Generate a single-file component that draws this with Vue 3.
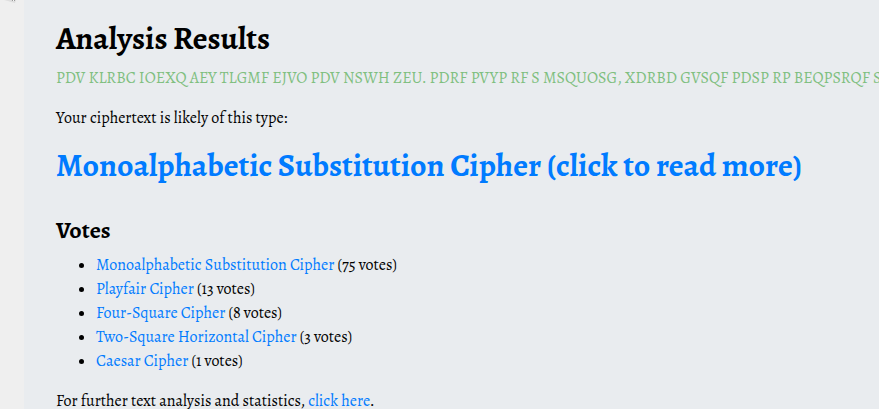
<script setup>
const ciphertext = 'PDV KLRBC IOEXQ AEY TLGMF EJVO PDV NSWH ZEU. PDRF PVYP RF S MSQUOSG, XDRBD GVSQF PDSP RP BEQPSRQF S'
const votes = [
  { name: 'Monoalphabetic Substitution Cipher', label: '75 votes' },
  { name: 'Playfair Cipher', label: '13 votes' },
  { name: 'Four-Square Cipher', label: '8 votes' },
  { name: 'Two-Square Horizontal Cipher', label: '3 votes' },
  { name: 'Caesar Cipher', label: '1 votes' },
]
</script>

<template>
  <div class="page">
    <svg class="flourish" width="24" height="6" viewBox="0 0 24 6" aria-hidden="true">
      <path d="M4 0H16L15 3L11 2L8 1Z" fill="#dedede" />
      <path d="M12 0H13V1H12ZM14 0H15V1H14Z" fill="#999" />
      <path d="M13 0H14V1H13Z" fill="#f8f8f8" />
    </svg>
    <main class="results">
      <h2>Analysis Results</h2>
      <p class="ciphertext">{{ ciphertext }}</p>
      <p>Your ciphertext is likely of this type:</p>
      <h2 class="type"><a href="#">Monoalphabetic Substitution Cipher (click to read more)</a></h2>
      <h4>Votes</h4>
      <ul>
        <li v-for="vote in votes" :key="vote.name">
          <a href="#">{{ vote.name }}</a> ({{ vote.label }})
        </li>
      </ul>
      <p>For further text analysis and statistics, <a href="#">click here</a>.</p>
    </main>
  </div>
</template>

<style>
body {
  background: #efefef;
}
</style>

<style scoped>
.page {
  display: flex;
  min-height: 100vh;
  overflow: hidden;
  font-family: Alegreya, "Liberation Serif", serif;
  font-size: 16px;
  line-height: 24px;
  color: #000;
}
.flourish {
  flex: none;
}
.results {
  flex: 1;
  min-width: 0;
  padding: 19px 32px 0;
  background: #e9ecef;
}
h2 {
  margin: 0 0 9px;
  font-size: 32px;
  line-height: 1.2;
  white-space: nowrap;
}
h4 {
  margin: 0 0 8px;
  font-size: 24px;
  line-height: 1.2;
}
p {
  margin: 0 0 16px;
}
.ciphertext {
  color: #7fbf7f;
  white-space: nowrap;
}
.type {
  margin-bottom: 31px;
}
ul {
  margin: 0 0 16px;
  padding-left: 40px;
}
a {
  color: #007bff;
  text-decoration: none;
}
</style>
